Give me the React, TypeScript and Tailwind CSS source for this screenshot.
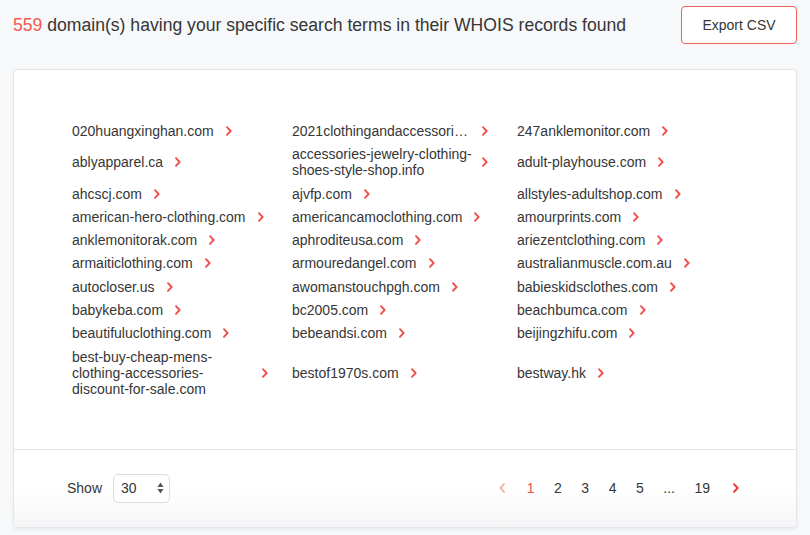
import React from "react";

type Item = { lines: string[]; fixed?: boolean };

const rows: Item[][] = [
  [{ lines: ["020huangxinghan.com"] }, { lines: ["2021clothingandaccessori…"], fixed: true }, { lines: ["247anklemonitor.com"] }],
  [{ lines: ["ablyapparel.ca"] }, { lines: ["accessories-jewelry-clothing-", "shoes-style-shop.info"], fixed: true }, { lines: ["adult-playhouse.com"] }],
  [{ lines: ["ahcscj.com"] }, { lines: ["ajvfp.com"] }, { lines: ["allstyles-adultshop.com"] }],
  [{ lines: ["american-hero-clothing.com"] }, { lines: ["americancamoclothing.com"] }, { lines: ["amourprints.com"] }],
  [{ lines: ["anklemonitorak.com"] }, { lines: ["aphroditeusa.com"] }, { lines: ["ariezentclothing.com"] }],
  [{ lines: ["armaiticlothing.com"] }, { lines: ["armouredangel.com"] }, { lines: ["australianmuscle.com.au"] }],
  [{ lines: ["autocloser.us"] }, { lines: ["awomanstouchpgh.com"] }, { lines: ["babieskidsclothes.com"] }],
  [{ lines: ["babykeba.com"] }, { lines: ["bc2005.com"] }, { lines: ["beachbumca.com"] }],
  [{ lines: ["beautifuluclothing.com"] }, { lines: ["bebeandsi.com"] }, { lines: ["beijingzhifu.com"] }],
  [
    { lines: ["best-buy-cheap-mens-", "clothing-accessories-", "discount-for-sale.com"], fixed: true },
    { lines: ["bestof1970s.com"] },
    { lines: ["bestway.hk"] },
  ],
];

function Chevron({ className = "" }: { className?: string }) {
  return (
    <svg width="6" height="10" viewBox="0 0 6 10" className={className} fill="none">
      <path d="M1 1.2 L4.6 5 L1 8.8" stroke="currentColor" strokeWidth="1.9" strokeLinecap="round" strokeLinejoin="round" />
    </svg>
  );
}

function DomainItem({ item }: { item: Item }) {
  return (
    <div className="flex items-center">
      <div className={`whitespace-nowrap text-[14px] leading-[16px] text-[#363636] ${item.fixed ? "w-[178px]" : ""}`}>
        {item.lines.map((l, i) => (
          <React.Fragment key={i}>
            {i > 0 && <br />}
            {l}
          </React.Fragment>
        ))}
      </div>
      <Chevron className="ml-3 shrink-0 text-[#f0504a]" />
    </div>
  );
}

export default function App() {
  const pages = ["1", "2", "3", "4", "5", "...", "19"];
  return (
    <div
      className="min-h-[535px] w-[810px] bg-[#f7f8fa] pt-[6px] px-[13px]"
      style={{ fontFamily: '"Liberation Sans", Arial, Helvetica, sans-serif' }}
    >
      <div className="flex h-[38px] items-center justify-between">
        <div className="text-[17.6px] text-[#363636]">
          <span className="text-[#f25a52]">559</span> domain(s) having your specific search terms in their WHOIS records found
        </div>
        <button className="h-[38px] w-[116px] rounded-[4px] border border-[#f0605a] bg-white text-[14px] text-[#363636]">
          Export CSV
        </button>
      </div>

      <div className="mt-[25px] overflow-hidden rounded-[4px] border border-[#e4e6e9] bg-white shadow-[0_2px_3px_rgba(0,0,0,0.06)]">
        <div className="grid grid-cols-[220px_225px_1fr] items-center gap-y-[7.3px] pl-[58px] pt-[53px] pb-[52px]">
          {rows.flatMap((r, ri) => r.map((it, ci) => <DomainItem key={`${ri}-${ci}`} item={it} />))}
        </div>
        <div className="flex h-[78px] items-center justify-between border-t border-[#e6e6e6] bg-gradient-to-b from-white from-50% to-[#f4f5f6] pl-[53px] pr-[57px]">
          <div className="flex items-center">
            <span className="text-[14px] text-[#363636]">Show</span>
            <div className="ml-[11px] flex h-[29px] w-[57px] items-center justify-between rounded-[5px] border border-[#dcdcdc] bg-white pl-[7px] pr-[5px]">
              <span className="text-[14px] text-[#363636]">30</span>
              <svg width="7" height="12" viewBox="0 0 7 12">
                <path d="M3.5 0.5 L6.5 5 L0.5 5 Z" fill="#555" />
                <path d="M3.5 11.5 L6.5 7 L0.5 7 Z" fill="#555" />
              </svg>
            </div>
          </div>
          <div className="flex items-center text-[14px] text-[#363636]">
            <Chevron className="rotate-180 text-[#f6b2ad]" />
            <div className="ml-[22px] flex items-center gap-x-[19.5px]">
              {pages.map((p) => (
                <span key={p} className={p === "1" ? "text-[#f0504a]" : ""}>
                  {p}
                </span>
              ))}
            </div>
            <Chevron className="ml-[23px] text-[#f0303a]" />
          </div>
        </div>
      </div>
    </div>
  );
}
